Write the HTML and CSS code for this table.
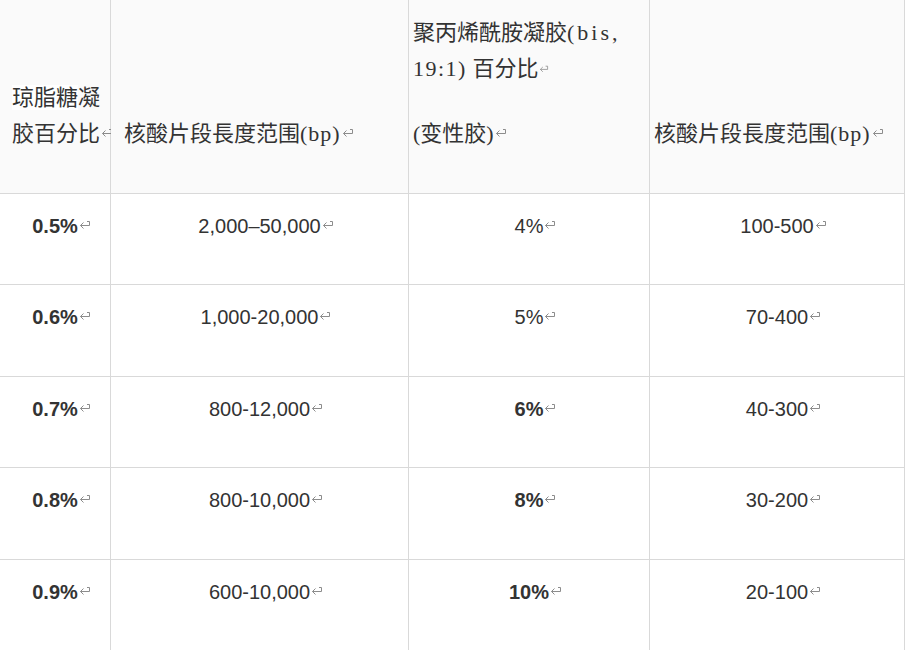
FILE: index.html
```html
<!DOCTYPE html>
<html lang="zh-CN">
<head>
<meta charset="utf-8">
<title>凝胶百分比与核酸片段长度范围</title>
<link rel="stylesheet" href="styles.css">
</head>
<body>
<div class="gel-table">
  <div class="cell head c1"><span><span class="hl">琼脂糖</span>凝</span><span class="nw">胶百分比<svg class="ret" viewBox="0 0 12 10"><path d="M8 1.5H10.5V5.5H1.5M4.5 2.5L1.5 5.5L4.5 8.5"/></svg></span></div>
  <div class="cell head c2"><span class="nw">核酸片段長度范围<span class="lat bp">(bp)</span><svg class="ret" viewBox="0 0 12 10"><path d="M8 1.5H10.5V5.5H1.5M4.5 2.5L1.5 5.5L4.5 8.5"/></svg></span></div>
  <div class="cell head c3 tight">
    <p class="para">聚丙烯酰胺凝胶<span class="lat wide">(bis,</span><br><span class="lat mid">19:1)</span> 百分比<svg class="ret small" viewBox="0 0 12 10"><path d="M8 1.5H10.5V5.5H1.5M4.5 2.5L1.5 5.5L4.5 8.5"/></svg></p>
    <p class="para"><span class="lat">(</span>变性胶<span class="lat">)</span><svg class="ret" viewBox="0 0 12 10"><path d="M8 1.5H10.5V5.5H1.5M4.5 2.5L1.5 5.5L4.5 8.5"/></svg></p>
  </div>
  <div class="cell head c4 tight"><span class="nw">核酸片段長度范围<span class="lat bp">(bp)</span><svg class="ret" viewBox="0 0 12 10"><path d="M8 1.5H10.5V5.5H1.5M4.5 2.5L1.5 5.5L4.5 8.5"/></svg></span></div>

  <div class="cell body b">0.5%<svg class="ret" viewBox="0 0 12 10"><path d="M8 1.5H10.5V5.5H1.5M4.5 2.5L1.5 5.5L4.5 8.5"/></svg></div>
  <div class="cell body">2,000–50,000<svg class="ret" viewBox="0 0 12 10"><path d="M8 1.5H10.5V5.5H1.5M4.5 2.5L1.5 5.5L4.5 8.5"/></svg></div>
  <div class="cell body">4%<svg class="ret" viewBox="0 0 12 10"><path d="M8 1.5H10.5V5.5H1.5M4.5 2.5L1.5 5.5L4.5 8.5"/></svg></div>
  <div class="cell body">100-500<svg class="ret" viewBox="0 0 12 10"><path d="M8 1.5H10.5V5.5H1.5M4.5 2.5L1.5 5.5L4.5 8.5"/></svg></div>

  <div class="cell body b">0.6%<svg class="ret" viewBox="0 0 12 10"><path d="M8 1.5H10.5V5.5H1.5M4.5 2.5L1.5 5.5L4.5 8.5"/></svg></div>
  <div class="cell body">1,000-20,000<svg class="ret" viewBox="0 0 12 10"><path d="M8 1.5H10.5V5.5H1.5M4.5 2.5L1.5 5.5L4.5 8.5"/></svg></div>
  <div class="cell body">5%<svg class="ret" viewBox="0 0 12 10"><path d="M8 1.5H10.5V5.5H1.5M4.5 2.5L1.5 5.5L4.5 8.5"/></svg></div>
  <div class="cell body">70-400<svg class="ret" viewBox="0 0 12 10"><path d="M8 1.5H10.5V5.5H1.5M4.5 2.5L1.5 5.5L4.5 8.5"/></svg></div>

  <div class="cell body b">0.7%<svg class="ret" viewBox="0 0 12 10"><path d="M8 1.5H10.5V5.5H1.5M4.5 2.5L1.5 5.5L4.5 8.5"/></svg></div>
  <div class="cell body">800-12,000<svg class="ret" viewBox="0 0 12 10"><path d="M8 1.5H10.5V5.5H1.5M4.5 2.5L1.5 5.5L4.5 8.5"/></svg></div>
  <div class="cell body b">6%<svg class="ret" viewBox="0 0 12 10"><path d="M8 1.5H10.5V5.5H1.5M4.5 2.5L1.5 5.5L4.5 8.5"/></svg></div>
  <div class="cell body">40-300<svg class="ret" viewBox="0 0 12 10"><path d="M8 1.5H10.5V5.5H1.5M4.5 2.5L1.5 5.5L4.5 8.5"/></svg></div>

  <div class="cell body b">0.8%<svg class="ret" viewBox="0 0 12 10"><path d="M8 1.5H10.5V5.5H1.5M4.5 2.5L1.5 5.5L4.5 8.5"/></svg></div>
  <div class="cell body">800-10,000<svg class="ret" viewBox="0 0 12 10"><path d="M8 1.5H10.5V5.5H1.5M4.5 2.5L1.5 5.5L4.5 8.5"/></svg></div>
  <div class="cell body b">8%<svg class="ret" viewBox="0 0 12 10"><path d="M8 1.5H10.5V5.5H1.5M4.5 2.5L1.5 5.5L4.5 8.5"/></svg></div>
  <div class="cell body">30-200<svg class="ret" viewBox="0 0 12 10"><path d="M8 1.5H10.5V5.5H1.5M4.5 2.5L1.5 5.5L4.5 8.5"/></svg></div>

  <div class="cell body b last">0.9%<svg class="ret" viewBox="0 0 12 10"><path d="M8 1.5H10.5V5.5H1.5M4.5 2.5L1.5 5.5L4.5 8.5"/></svg></div>
  <div class="cell body last">600-10,000<svg class="ret" viewBox="0 0 12 10"><path d="M8 1.5H10.5V5.5H1.5M4.5 2.5L1.5 5.5L4.5 8.5"/></svg></div>
  <div class="cell body b last">10%<svg class="ret" viewBox="0 0 12 10"><path d="M8 1.5H10.5V5.5H1.5M4.5 2.5L1.5 5.5L4.5 8.5"/></svg></div>
  <div class="cell body last">20-100<svg class="ret" viewBox="0 0 12 10"><path d="M8 1.5H10.5V5.5H1.5M4.5 2.5L1.5 5.5L4.5 8.5"/></svg></div>
</div>
</body>
</html>
```

FILE: styles.css
```css
html, body {
  margin: 0;
  padding: 0;
  background: #ffffff;
}

body {
  color: #333333;
  font-family: "Liberation Sans", Arial, "Noto Sans CJK SC", sans-serif;
  overflow: hidden;
}

.gel-table {
  display: grid;
  grid-template-columns: 111px 298px 241px 255px;
  grid-template-rows: 194px 91px 92px 91px 92px 100px;
  width: 905px;
}

.cell {
  box-sizing: border-box;
  border-right: 1px solid #d9d9d9;
  border-bottom: 1px solid #d9d9d9;
  min-width: 0;
}

.cell.last {
  border-bottom: none;
}

.head {
  background: #fafafa;
  display: flex;
  flex-direction: column;
  justify-content: flex-end;
  padding: 0 0 41px 13px;
  font-family: "Liberation Serif", "Noto Sans CJK SC", serif;
  font-size: 22px;
  line-height: 36px;
  color: #333333;
}

.head.c1 {
  padding-left: 12px;
}

.head.tight {
  padding-left: 4px;
}

.nw {
  white-space: nowrap;
}

.hl {
  background: #ffffff;
}

.lat {
  font-family: "Liberation Serif", serif;
}

.lat.bp {
  letter-spacing: 1px;
}

.lat.wide {
  letter-spacing: 3px;
}

.lat.mid {
  letter-spacing: 1.5px;
}

.para {
  margin: 0;
  white-space: nowrap;
}

.para + .para {
  margin-top: 29px;
}

.body {
  padding: 19px 0 0 13px;
  text-align: center;
  font-size: 20px;
  line-height: 26px;
  color: #333333;
  white-space: nowrap;
}

.body.b {
  font-weight: bold;
}

.ret {
  width: 12px;
  height: 10px;
  margin-left: 1px;
  vertical-align: 3px;
  fill: none;
  stroke: #8c8c8c;
  stroke-width: 1;
}

.ret.small {
  width: 10px;
  height: 8px;
}
```
